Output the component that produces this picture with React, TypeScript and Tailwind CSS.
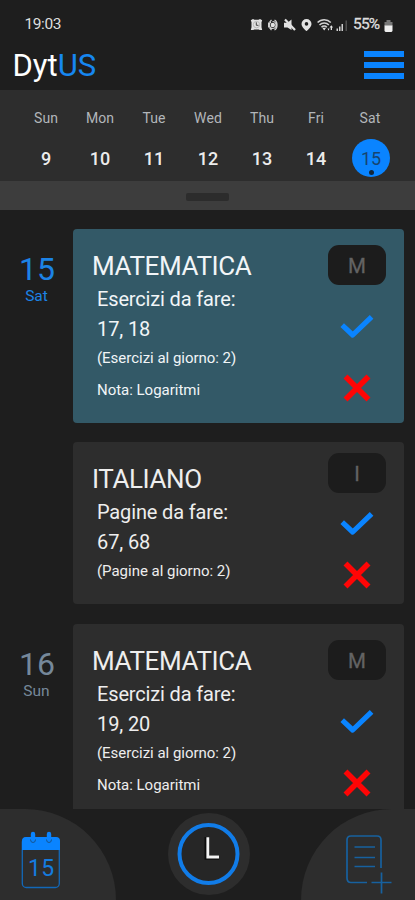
type Task = {
  title: string;
  label: string;
  items: string;
  perDay: string;
  note?: string;
  letter: string;
  active?: boolean;
};

const days = [
  { name: "Sun", num: "9" },
  { name: "Mon", num: "10" },
  { name: "Tue", num: "11" },
  { name: "Wed", num: "12" },
  { name: "Thu", num: "13" },
  { name: "Fri", num: "14" },
  { name: "Sat", num: "15", selected: true },
];

const math = { title: "MATEMATICA", label: "Esercizi da fare:", perDay: "(Esercizi al giorno: 2)", note: "Nota: Logaritmi", letter: "M" };

function StatusIcons() {
  return (
    <svg width="98" height="16" viewBox="0 0 98 16" fill="#e2e2e2">
      {/* alarm */}
      <path d="M.8 3.200 3 2l1.500.7h4L10 2l2.200 1.200-.7 2v5l.7 2.800H9.700l-1-.6H4.300l-1 .6H.8l.7-2.800v-5Z" />
      <path d="M6.300 5.300v3h2.200" fill="none" stroke="#444" strokeWidth="1" />
      <circle cx="6.500" cy="7.600" r="3.200" fill="none" stroke="#a8a8a8" strokeWidth=".7" />
      {/* vibration */}
      <circle cx="22.800" cy="8" r="2.200" />
      <path d="M18.600 5.500v5M24.500 3c3.400 1.500 3.400 8.500 0 10M21.500 2.800l-2 2.600M21.500 13.200l-2-2.600M22.500 4.500a3.500 3.500 0 0 1 0 7a3.500 3.500 0 0 1-1.500-6.500" fill="none" stroke="#d0d0d0" strokeWidth="1.200" />
      {/* muted */}
      <path d="M34 5.800h3.500l4-3.300V13l-4-2.500H34Z" />
      <path d="m35 2.500 10 10.500" stroke="#e2e2e2" strokeWidth="2.200" />
      {/* location */}
      <path fillRule="evenodd" d="M56.500 2a5 5 0 0 0-5 4.900c0 3.200 5 7.100 5 7.100s5-3.900 5-7.100A5 5 0 0 0 56.500 2Zm0 3.100a1.800 1.800 0 1 1 0 3.600 1.800 1.800 0 0 1 0-3.600Z" />
      {/* wifi */}
      <path d="M67.600 5.600c3.600-3.800 9.600-3.800 13.200 0M69.500 8c2.600-2.600 6.800-2.600 9.400 0M71.500 10.200c1.500-1.500 3.900-1.500 5.400 0" fill="none" stroke="#d2d2d2" strokeWidth="1.500" />
      <path d="m72.300 10.800 1.900 2.700 1.900-2.700ZM79.500 10.500l1.800-2.200 1.800 2.200ZM80.700 10h1.300v3h-1.300ZM77.500 11.500l1 2.200 1-2.200Z" />
      {/* signal */}
      <path d="M86.500 11.500H88V14h-1.500ZM89 9.500h1.500V14H89ZM91.500 7H93v7h-1.500Z" fill="#cfcfcf" />
      <path d="M95.500 3.500H97V14h-1.500Z" fill="#505050" />
    </svg>
  );
}

function Header() {
  return (
    <header className="h-[90px] bg-[#1e1e1e]">
      <div className="flex h-[46px] items-center pl-[24.5px] pr-[22px] pt-[4px] text-[15.5px] text-[#dedede]">
        <span className="tracking-[-0.4px]">19:03</span>
        <div className="ml-auto flex items-center">
          <StatusIcons />
          <span className="ml-[5px] w-[31px] whitespace-nowrap tracking-[-0.8px] [-webkit-text-stroke:0.3px]">55%</span>
          <svg width="9" height="14" viewBox="0 0 9 14" className="mt-px">
            <path d="M2.500 1h4v2h2v4h-8V3h2Z" fill="#777" />
            <path d="M.5 6.500h8V12l-1 1h-6l-1-1Z" fill="#eee" />
          </svg>
        </div>
      </div>
      <div className="flex justify-between pl-[12.5px] pr-[11px]">
        <h1 className="text-[31px] leading-[40px] text-white">
          Dyt<span className="text-[#1687f0]">US</span>
        </h1>
        <div className="mt-[5px] flex w-[40px] flex-col gap-[5px]">
          <div className="h-[6px] bg-[#0a84ff]" />
          <div className="h-[6px] bg-[#0a84ff]" />
          <div className="h-[6px] bg-[#0a84ff]" />
        </div>
      </div>
    </header>
  );
}

function Week() {
  return (
    <section>
      <div className="flex h-[91px] bg-[#2d2d2d] pl-[19px] pr-[18px] pt-[18px]">
        {days.map((d) => (
          <div key={d.num} className="flex w-[54px] flex-col items-center">
            <span className="text-[14px] leading-[20px] tracking-[0.1px] text-[#b2b6ba]">{d.name}</span>
            <div
              className={
                d.selected
                  ? "relative ml-[2px] mt-[11px] flex h-[38px] w-[38px] items-center justify-center rounded-full bg-[#0a84ff] text-[18px] text-[#17446f]"
                  : "mt-[11px] flex h-[38px] items-center justify-center text-[18px] font-medium text-[#ececec]"
              }
            >
              {d.num}
              {d.selected && <i className="absolute bottom-[2px] left-[17px] h-[5px] w-[5px] rounded-full bg-[#12263a]" />}
            </div>
          </div>
        ))}
      </div>
      <div className="flex h-[29px] items-center justify-center bg-[#3d3d3d] pt-[3px]">
        <div className="h-[8px] w-[43px] rounded-[2px] bg-[#2c2c2c]" />
      </div>
    </section>
  );
}

function Check() {
  return (
    <svg width="34" height="26" viewBox="0 0 34 26" fill="none" stroke="#0a84ff" strokeWidth="5.200" strokeLinejoin="round" className="shrink-0">
      <path d="M2.200 11.200 12.700 21 31.600 2.800" />
    </svg>
  );
}

function Cross() {
  return (
    <svg width="28" height="28" viewBox="0 0 28 28" fill="none" stroke="#ff0505" strokeWidth="5.600" className="shrink-0">
      <path d="m2.500 2.500 23 23M25.500 2.500l-23 23" />
    </svg>
  );
}

function Card({ task }: { task: Task }) {
  const long = Boolean(task.note);
  return (
    <article
      className={`flex w-[331px] justify-between rounded-[4px] pl-[19px] pr-[18px] ${long ? "h-[194px]" : "h-[162px]"} ${
        task.active ? "bg-[#335967] text-[#f1f5f7]" : "bg-[#2d2d2d] text-[#eeeeee]"
      }`}
    >
      <div className="flex flex-col whitespace-nowrap pt-[19px]">
        <h2 className="text-[26px] leading-[36px] tracking-[-0.4px]">{task.title}</h2>
        <p className="pl-[5px] text-[20px] leading-[30px] tracking-[-0.15px]">{task.label}</p>
        <p className="pl-[5px] text-[20px] leading-[30px] tracking-[-0.1px]">{task.items}</p>
        <p className="mt-px pl-[5px] text-[15px] leading-[26px] tracking-[-0.02px]">{task.perDay}</p>
        {long && <p className="mt-[6px] pl-[5px] text-[15px] leading-[26px] tracking-[-0.02px]">{task.note}</p>}
      </div>
      <div className={`flex w-[58px] flex-col items-center ${long ? "pt-[16px]" : "pt-[11px]"}`}>
        <div className="flex h-[40px] w-[58px] shrink-0 items-center justify-center rounded-[11px] bg-[#1c1c1c] pt-[2px] text-[20.5px] text-[#636363] [-webkit-text-stroke:0.3px]">
          {task.letter}
        </div>
        <div className={long ? "mt-[29px]" : "mt-[18px]"}>
          <Check />
        </div>
        <div className={long ? "mt-[34px]" : "mt-[24px]"}>
          <Cross />
        </div>
      </div>
    </article>
  );
}

function DayGroup({ num, name, tone, tasks }: { num: string; name: string; tone: string; tasks: Task[] }) {
  return (
    <div className="flex">
      <div className={`flex w-[73px] shrink-0 flex-col items-center pt-[22px] ${tone}`}>
        <span className="pl-px text-[32px] leading-[36px]">{num}</span>
        <span className="text-[15.5px] leading-[18px]">{name}</span>
      </div>
      <div className="flex flex-col gap-[19px]">
        {tasks.map((t) => (
          <Card key={t.title} task={t} />
        ))}
      </div>
    </div>
  );
}

function BottomBar() {
  return (
    <nav className="flex h-[91px] justify-between overflow-hidden bg-[#1e1e1e]">
      <div className="h-[91px] w-[116px] rounded-tr-[93px] bg-[#2d2d2d]">
        <svg width="42" height="60" viewBox="0 0 42 60" className="ml-[20px] mt-[21px]">
          <rect x="2.300" y="8" width="37" height="49.500" rx="4" fill="none" stroke="#1268b8" strokeWidth="1.300" />
          <path d="M2 20V11q0-4 4-4h30q4 0 4 4v9Z" fill="#0a84ff" />
          <path d="M13 4v7M29 4v7" stroke="#0a84ff" strokeWidth="4.400" strokeLinecap="round" />
          <path d="M10.500 9.500q0 3 2.500 3t2.500-3M26.500 9.500q0 3 2.500 3t2.500-3" fill="none" stroke="#17558f" strokeWidth="1" />
          <text x="21.200" y="46" textAnchor="middle" fontFamily="Roboto" fontSize="23" letterSpacing=".2" fill="#147ce0">15</text>
        </svg>
      </div>
      <div className="mt-[4px] flex h-[82px] w-[82px] items-center justify-center rounded-full bg-[#2d2d2d]">
        <svg width="64" height="64" viewBox="0 0 64 64" fill="none">
          <circle cx="31.500" cy="32" r="29" fill="#262626" stroke="#117ce8" strokeWidth="4" />
          <path d="M29.800 15v20.500H42" stroke="#0c0c0c" strokeWidth="4.500" />
          <path d="M30.800 15.300V35H42" stroke="#f4f4f4" strokeWidth="2.800" />
        </svg>
      </div>
      <div className="h-[91px] w-[114px] rounded-tl-[96px] bg-[#2d2d2d]">
        <svg width="48" height="62" viewBox="0 0 48 62" fill="none" stroke="#17619f" strokeWidth="1.700" className="ml-[43px] mt-[25px]">
          <path d="M37 34V6q0-4-4-4H7Q3 2 3 6v38q0 4.500 4 4.500h16M10.500 13H31M10.500 23.500H31M10.500 32.500H31M27.500 48.500h20M37.500 38.500v21" />
        </svg>
      </div>
    </nav>
  );
}

export default function App() {
  return (
    <div className="flex h-[900px] w-[415px] flex-col overflow-hidden bg-[#1e1e1e] font-['Roboto',sans-serif]">
      <Header />
      <Week />
      <main className="flex h-[599px] flex-col gap-[20px] overflow-hidden pt-[19px]">
        <DayGroup
          num="15"
          name="Sat"
          tone="text-[#1c83e6]"
          tasks={[
            { ...math, items: "17, 18", active: true },
            { title: "ITALIANO", label: "Pagine da fare:", items: "67, 68", perDay: "(Pagine al giorno: 2)", letter: "I" },
          ]}
        />
        <DayGroup num="16" name="Sun" tone="text-[#75889a]" tasks={[{ ...math, items: "19, 20" }]} />
      </main>
      <BottomBar />
    </div>
  );
}
